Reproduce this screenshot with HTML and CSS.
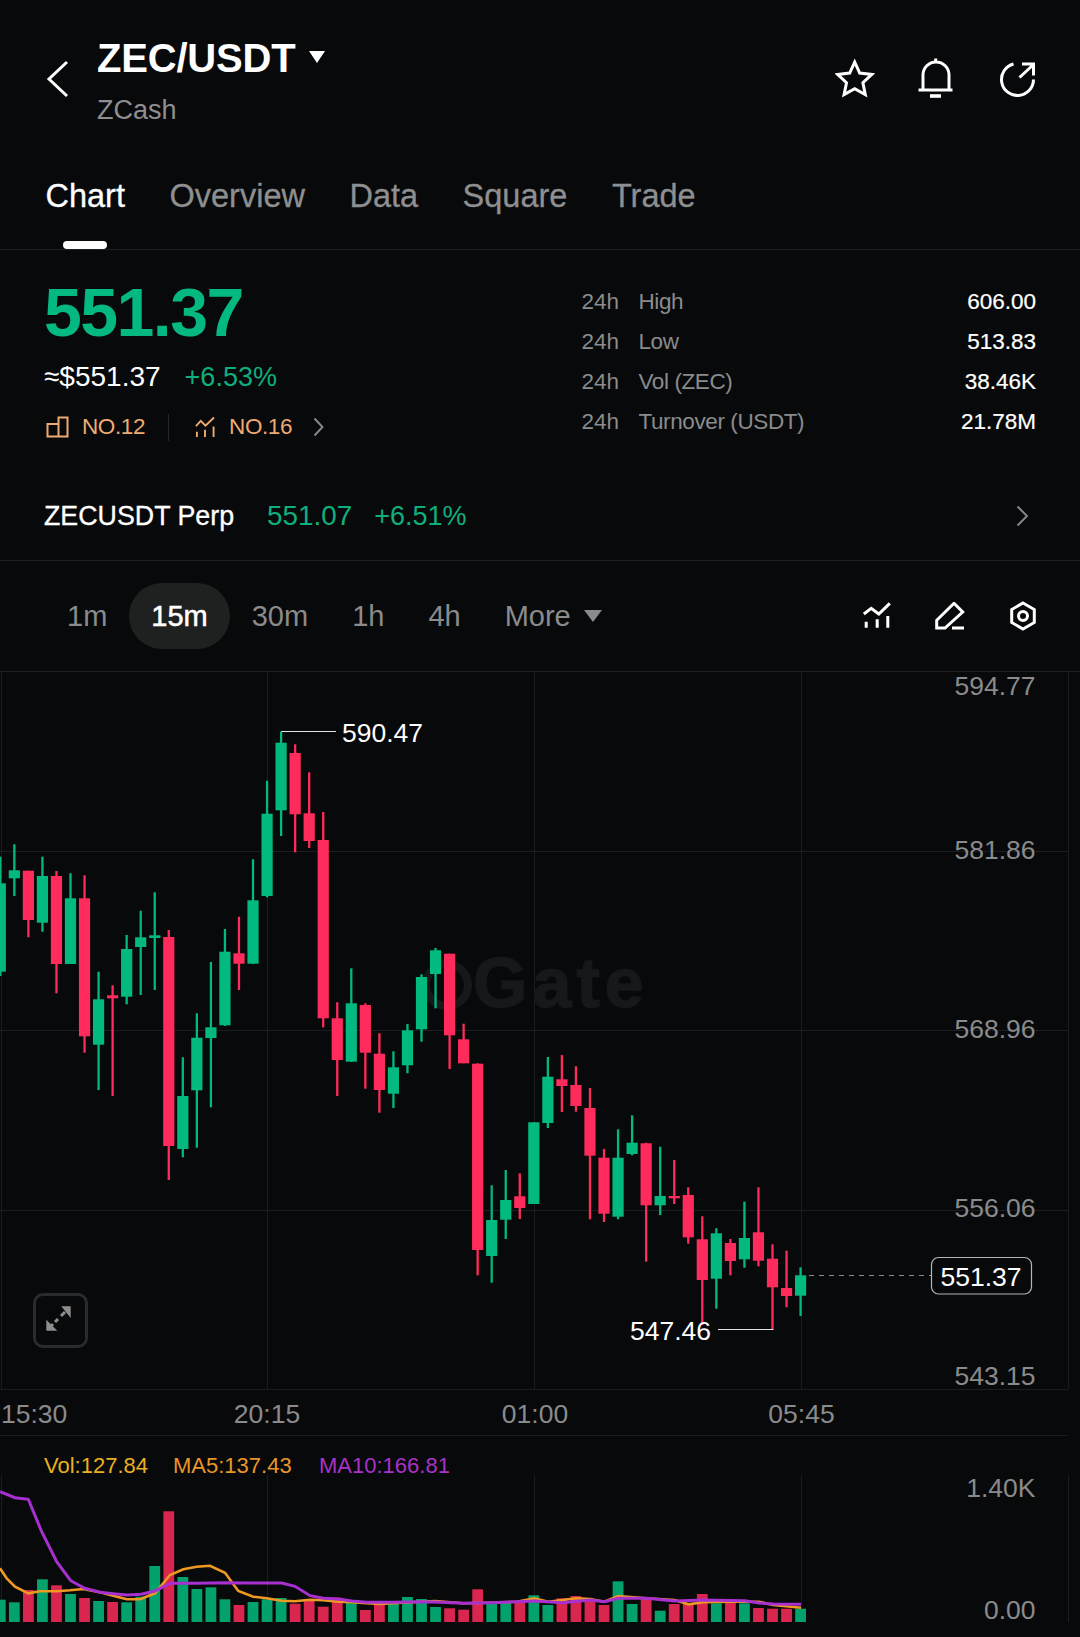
FILE: index.html
```html
<!DOCTYPE html>
<html lang="en">

<head>
    <meta charset="UTF-8">
    <title>ZEC/USDT</title>
    <link rel="stylesheet" href="styles.css">
</head>

<body>
    <header class="top">
        <svg class="back" width="24" height="40" viewBox="0 0 24 40">
            <path d="M21 3 L3 20 L21 37" />
        </svg>
        <div class="pair">
            <h1>ZEC/USDT <span class="caret"></span></h1>
            <p>ZCash</p>
        </div>
        <div class="top-icons">
            <svg width="40" height="40" viewBox="0 0 40 40">
                <path d="M19.7 4 L24.7 15 L36.8 16.4 L27.9 24.7 L30.3 36.6 L19.7 30.6 L9.1 36.6 L11.5 24.7 L2.6 16.4 L14.7 15 Z" />
            </svg>
            <svg width="40" height="40" viewBox="0 0 40 40">
                <path d="M7 32 V17 a13 13 0 0 1 26 0 V32 M2.5 32 H36.5 M19.7 0.5 V4" />
                <path d="M14 38 H25" class="thick" />
            </svg>
            <svg width="40" height="40" viewBox="0 0 40 40">
                <path d="M16.5 6 A16 16 0 1 0 36.5 21.5" />
                <path d="M22.5 19.5 L36 7 M25 6 H36.5 V17.5" />
            </svg>
        </div>
    </header>

    <nav class="tabs">
        <a class="valgt">Chart</a>
        <a>Overview</a>
        <a>Data</a>
        <a>Square</a>
        <a>Trade</a>
    </nav>

    <section class="market">
        <div class="price-box">
            <div class="price">551.37</div>
            <div class="sub-price">
                <span>≈$551.37</span>
                <span class="gain">+6.53%</span>
            </div>
            <div class="ranks">
                <svg class="rank-first-icon" width="23" height="22" viewBox="0 0 23 22">
                    <path d="M1.5 8 H12.5 V20.5 H1.5 Z M12.5 20.5 H21.5 V1.5 H12.5 V8" />
                </svg>
                <span class="rank-first">NO.12</span>
                <i class="rank-line"></i>
                <svg width="20" height="22" viewBox="0 0 21 22">
                    <path d="M1 10 L6 4.5 L11 9.5 L20 1 M2 16 V21.5 M10.5 14 V21.5 M19.5 10.5 V21.5" />
                </svg>
                <span class="rank-second">NO.16</span>
                <svg class="arrow" width="11" height="20" viewBox="0 0 11 20">
                    <path d="M1.5 1.5 L9.5 10 L1.5 18.5" />
                </svg>
            </div>
        </div>
        <div class="stats">
            <span>24h</span><span class="label">High</span><b>606.00</b>
            <span>24h</span><span class="label">Low</span><b>513.83</b>
            <span>24h</span><span class="label">Vol (ZEC)</span><b>38.46K</b>
            <span>24h</span><span class="label">Turnover (USDT)</span><b>21.78M</b>
        </div>
    </section>

    <section class="perp">
        <span class="perp-name">ZECUSDT Perp</span>
        <span class="perp-price">551.07</span>
        <span class="perp-gain">+6.51%</span>
        <svg class="arrow" width="13" height="22" viewBox="0 0 13 22">
            <path d="M1.5 1.5 L11 11 L1.5 20.5" />
        </svg>
    </section>

    <section class="toolbar">
        <button>1m</button>
        <button class="valgt">15m</button>
        <button>30m</button>
        <button>1h</button>
        <button>4h</button>
        <button>More<span class="more-caret"></span></button>
        <div class="tools">
            <svg width="28" height="28" viewBox="0 0 28 28">
                <path d="M0.8 12 L8.2 6.3 L15.8 12 L26.8 1.3 M3.2 19.7 V25.7 M14.2 17.3 V25.7 M24.8 14 V25.7" />
            </svg>
            <svg width="30" height="28" viewBox="0 0 30 28">
                <path d="M1.7 26 V18.3 L19 1.3 L27.7 10 L10 26 Z M17 26 H29" />
            </svg>
            <svg width="28" height="32" viewBox="0 0 28 32">
                <path d="M14 3 L25.3 9.5 V22.5 L14 29 L2.7 22.5 V9.5 Z" />
                <circle cx="14" cy="16" r="4.5" />
            </svg>
        </div>
    </section>

    <section class="chart">
        <svg id="kurve" width="1080" height="965" viewBox="0 672 1080 965">
            <g class="grid">
                <path d="M0 851.5 H1068 M0 1030.5 H1068 M0 1210.5 H1068 M0 1389.5 H1068 M0 1435.5 H1068" />
                <path d="M1.5 672 V1389 M267.5 672 V1389 M534.5 672 V1389 M801.5 672 V1389 M1068.5 672 V1389" />
                <path d="M1.5 1475 V1622 M267.5 1475 V1622 M534.5 1475 V1622 M801.5 1475 V1622 M1068.5 1475 V1622" />
            </g>

            <g class="watermark">
                <circle cx="447" cy="985" r="21" />
                <text x="473" y="1007">Gate</text>
            </g>

            <g id="candles"></g>
            <g id="volume"></g>

            <polyline class="ma5" points="0,1568.3 6.7,1578.3 15,1586.7 28.3,1593.3 40,1591.3 56.7,1591.3 70,1590.3 83.3,1589 100,1592.3 113.3,1595.7 126.7,1599.3 140,1599.3 155,1593.3 170,1575 183.3,1569.3 196.7,1566.7 210,1565.7 225,1572.7 238.3,1591 253.3,1596.7 266.7,1598.3 281.7,1600.7 295,1601.3 310,1599.7 323.3,1600.3 338.3,1601.7 351.7,1602.3 366.7,1603.3 380,1604 393.3,1603.3 420,1601.7 435,1601 463.3,1603.3 490,1602.7 516.7,1601.7 534.3,1598.3 548.3,1601.7 576.3,1598.3 590.3,1599 604.3,1601.7 618.3,1596 646.7,1598.3 674.7,1600 688.7,1604.3 702.7,1602.3 730.7,1601.7 759,1601.7 773,1605 801,1607.7" />
            <polyline class="ma10" points="0,1491.7 15,1497.7 28.3,1499.3 41.7,1531.7 56.7,1561.7 70.7,1580.7 84.7,1588.3 100,1592.3 113.3,1593.7 126.7,1595 141,1594.3 155,1591 170,1583.3 196.7,1583.3 225.3,1582.7 253.3,1583 281.7,1583 295,1586.3 310,1595.7 323.3,1598.3 338.3,1599 351.7,1601 366.7,1602.3 393.3,1602.3 420,1601.7 435,1602 463.3,1603.3 490,1602.7 516.7,1601.7 534.3,1601 562.3,1602.7 590.3,1600 604.3,1601.7 618.3,1598.3 646.7,1598.3 674.7,1601 702.7,1600 745,1600.7 759,1603 773,1604 801,1604.3" />

            <g class="axis">
                <text class="end" x="1035.5" y="695">594.77</text>
                <text class="end" x="1035.5" y="858.5">581.86</text>
                <text class="end" x="1035.5" y="1037.5">568.96</text>
                <text class="end" x="1035.5" y="1216.5">556.06</text>
                <text class="end" x="1035.5" y="1385">543.15</text>
                <text class="end" x="1035.5" y="1496.5">1.40K</text>
                <text class="end" x="1035.5" y="1619">0.00</text>
                <text x="1" y="1422.5">15:30</text>
                <text class="mid" x="267" y="1422.5">20:15</text>
                <text class="mid" x="535" y="1422.5">01:00</text>
                <text class="mid" x="801.5" y="1422.5">05:45</text>
            </g>

            <g class="legend">
                <text class="vol" x="44" y="1473">Vol:127.84</text>
                <text class="ma5-txt" x="173" y="1473">MA5:137.43</text>
                <text class="ma10-txt" x="319" y="1473">MA10:166.81</text>
            </g>

            <g class="marks">
                <path d="M281.5 732 V731.5 H336" />
                <text x="342" y="741.5">590.47</text>
                <path d="M718 1329.5 H773.5" />
                <text x="630" y="1339.5">547.46</text>
            </g>

            <path class="last-line" d="M809 1275.5 H932" />
            <rect class="last-box" x="931.5" y="1257.5" width="100" height="36.5" rx="7" />
            <text class="last-txt" x="940.5" y="1285.5">551.37</text>
        </svg>

        <button class="expand">
            <svg width="30" height="30" viewBox="0 0 30 30">
                <path d="M15.3 0.3 H24.7 V12 Z M0.3 13.7 V24.7 H11.3 Z" class="fill" />
                <path d="M19 6 L15 10 M12 13 L9 16 M7 18 L5 20" />
            </svg>
        </button>
    </section>

    <script src="script.js"></script>
</body>

</html>
```
FILE: styles.css
```css
* {
    box-sizing: border-box;
}

html,
body {
    margin: 0;
    height: 1637px;
    overflow: hidden;
}

body {
    background: #08090a;
    color: white;
    font-family: "Liberation Sans", Arial, sans-serif;
}

svg {
    display: block;
    fill: none;
    stroke: white;
    stroke-width: 3;
}

/* top bar */
.top {
    display: flex;
    height: 174px;
    padding: 33.5px 43px 0 46px;
}

.back {
    margin-top: 25.5px;
    margin-right: 27px;
}

.pair h1 {
    margin: 0;
    font-size: 40px;
    line-height: 48px;
    letter-spacing: -0.2px;
    display: flex;
    align-items: center;
}

.caret {
    width: 0;
    height: 0;
    margin-left: 14px;
    margin-top: -1px;
    border-left: 8.5px solid transparent;
    border-right: 8.5px solid transparent;
    border-top: 12px solid white;
}

.pair p {
    margin: 12.5px 0 0;
    font-size: 27px;
    line-height: 32px;
    color: #8e8f90;
}

.top-icons {
    display: flex;
    gap: 41px;
    margin-left: auto;
    margin-top: 24.5px;
}

.top-icons .thick {
    stroke-width: 3.6;
}

/* tabs */
.tabs {
    display: flex;
    gap: 44.5px;
    height: 76px;
    padding: 2px 0 0 45.5px;
    border-bottom: 1px solid #1f2021;
    font-size: 32.5px;
    line-height: 40px;
    color: #8e8f90;
    -webkit-text-stroke: 0.3px;
}

.tabs a {
    position: relative;
}

.tabs .valgt {
    color: white;
}

.tabs .valgt::after {
    content: "";
    position: absolute;
    left: 17px;
    top: 64.5px;
    width: 44px;
    height: 8.5px;
    border-radius: 4.5px;
    background: white;
}

/* price block */
.market {
    display: flex;
    justify-content: space-between;
    height: 220px;
    padding: 24px 44px 0 44px;
}

.price {
    font-size: 68px;
    line-height: 76px;
    font-weight: bold;
    letter-spacing: -1.55px;
    color: #03b981;
}

.sub-price {
    display: flex;
    gap: 24px;
    margin-top: 11px;
    font-size: 28px;
    line-height: 32px;
}

.gain {
    font-size: 27px;
    color: #0fae7e;
}

.ranks {
    display: flex;
    align-items: center;
    margin-top: 20px;
    font-size: 22.5px;
    line-height: 28px;
    letter-spacing: -0.4px;
    color: #edab72;
}

.ranks svg {
    stroke: #edab72;
    stroke-width: 2;
}

.rank-first-icon {
    margin-left: 2px;
}

.rank-first {
    margin-left: 13px;
}

.rank-line {
    width: 1px;
    height: 27px;
    margin: 0 26px 0 23px;
    background: #262728;
}

.rank-second {
    margin-left: 14px;
}

.ranks .arrow {
    margin-left: 21px;
    stroke: #85868a;
}

.stats {
    display: grid;
    grid-template-columns: 57px 1fr auto;
    grid-auto-rows: 40px;
    width: 454.5px;
    margin-top: 7.5px;
    font-size: 22.5px;
    line-height: 40px;
    color: #8a8b8c;
}

.stats .label {
    letter-spacing: -0.4px;
}

.stats b {
    font-weight: normal;
    color: white;
    text-align: right;
    -webkit-text-stroke: 0.2px;
}

/* perp row */
.perp {
    display: flex;
    align-items: center;
    height: 91px;
    padding: 30px 51px 28px 44px;
    border-bottom: 1px solid #1f2021;
    font-size: 26.8px;
    line-height: 32px;
}

.perp-name {
    -webkit-text-stroke: 0.3px;
}

.perp-price {
    margin-left: 33px;
    font-size: 27.8px;
    color: #0fae7e;
}

.perp-gain {
    margin-left: 22px;
    font-size: 27px;
    color: #0fae7e;
}

.perp .arrow {
    margin-left: auto;
    stroke: #85868a;
    stroke-width: 2;
}

/* period bar */
.toolbar {
    display: flex;
    align-items: center;
    height: 111px;
    padding: 0 43.5px 0 45px;
    border-bottom: 1px solid #1f2021;
}

.toolbar button {
    display: flex;
    align-items: center;
    height: 66px;
    padding: 0 22px;
    border: 0;
    border-radius: 33px;
    background: none;
    font-family: inherit;
    font-size: 29px;
    color: #8a8b8c;
}

.toolbar .valgt {
    background: #1f2121;
    color: white;
    -webkit-text-stroke: 0.5px;
}

.more-caret {
    width: 0;
    height: 0;
    margin-left: 13px;
    border-left: 9.5px solid transparent;
    border-right: 9.5px solid transparent;
    border-top: 12px solid #8a8b8c;
}

.tools {
    display: flex;
    align-items: center;
    gap: 44px;
    margin-left: auto;
}

/* chart */
.chart {
    position: relative;
}

.grid path {
    stroke: #1c1d1e;
    stroke-width: 1;
}

.watermark circle {
    stroke: #171819;
    stroke-width: 8;
}

.watermark text {
    fill: #171819;
    stroke: #171819;
    stroke-width: 1.5;
    font-size: 70px;
    font-weight: bold;
    letter-spacing: 5px;
}

#kurve text {
    font-family: "Liberation Sans", Arial, sans-serif;
}

.axis text {
    fill: #8a8b8c;
    stroke: none;
    font-size: 26.5px;
}

.axis .end {
    text-anchor: end;
}

.axis .mid {
    text-anchor: middle;
}

.legend text {
    stroke: none;
    font-size: 22px;
}

.vol {
    fill: #e9b020;
}

.ma5-txt {
    fill: #e8962a;
}

.ma10-txt {
    fill: #a832c9;
}

.ma5 {
    stroke: #ee9a22;
    stroke-width: 2.6;
}

.ma10 {
    stroke: #a82fd0;
    stroke-width: 3;
}

.marks path {
    stroke: #e4e4e4;
    stroke-width: 1;
}

.marks text,
.last-txt {
    fill: white;
    stroke: none;
    font-size: 26.5px;
}

.last-line {
    stroke: #8a8b8c;
    stroke-width: 1;
    stroke-dasharray: 5 5;
}

.last-box {
    stroke: #b5b5b5;
    stroke-width: 1.2;
    fill: #08090a;
}

.expand {
    position: absolute;
    left: 33px;
    top: 621px;
    display: flex;
    align-items: center;
    justify-content: center;
    width: 55px;
    height: 55px;
    padding: 0;
    border: 3px solid #2a2b2c;
    border-radius: 10px;
    background: none;
}

.expand path {
    stroke: #8e8e8e;
    stroke-width: 3;
}

.expand .fill {
    fill: #8e8e8e;
    stroke: none;
}
```
FILE: script.js
```js
// [wick top, body top, body bottom, wick bottom, up?, volume top]
const lys = [
    [856.7, 883.3, 971.7, 976, 1, 1599.7],
    [844.3, 870.3, 878.3, 896, 1, 1602.3],
    [870.7, 870.7, 920, 937.3, 0, 1590],
    [856.7, 876, 922.7, 931.7, 1, 1579.3],
    [871, 876, 964, 993.3, 0, 1585.3],
    [873.3, 898.3, 964, 964, 1, 1594],
    [875.3, 898.3, 1036.3, 1052.7, 0, 1598],
    [971.7, 999.3, 1044.7, 1090, 1, 1601],
    [985.3, 995.3, 998.3, 1096, 0, 1602],
    [935, 949, 996.7, 1004.3, 1, 1602.3],
    [910.7, 937.3, 947, 995, 1, 1596.7],
    [892.3, 935.3, 938, 990, 1, 1566],
    [930, 937, 1146, 1180, 0, 1511.3],
    [1057.3, 1096, 1149, 1157.3, 1, 1577],
    [1013.3, 1037.7, 1090.3, 1147.7, 1, 1589],
    [962, 1027.3, 1038, 1107.3, 1, 1587.3],
    [929, 951.7, 1025.3, 1026, 1, 1599.3],
    [916.7, 953.3, 963.7, 990, 0, 1605],
    [859.3, 900.3, 963.7, 963.7, 1, 1602],
    [780.7, 813.7, 896, 897.3, 1, 1599.3],
    [731.7, 742.7, 810.3, 836, 1, 1598],
    [744.3, 753, 814.3, 852.3, 0, 1603.7],
    [772.3, 813.3, 841, 848, 0, 1599.3],
    [812, 840, 1018.3, 1027.3, 0, 1606.7],
    [1002.3, 1018.3, 1060, 1096, 0, 1597.7],
    [968.3, 1003.3, 1061.7, 1061.7, 1, 1602.3],
    [1003.3, 1005, 1052.7, 1088.7, 0, 1610],
    [1033.3, 1053.7, 1090, 1112.7, 0, 1603.3],
    [1051.3, 1067.3, 1093.7, 1108, 1, 1602.7],
    [1024, 1030.3, 1065.3, 1073.3, 1, 1597],
    [974.3, 977, 1029.3, 1041.7, 1, 1599],
    [948, 950.3, 974, 1008.3, 1, 1607],
    [953.7, 953.7, 1035.3, 1069, 0, 1608.3],
    [1023.7, 1039.3, 1063.3, 1063.3, 0, 1609.7],
    [1063.3, 1063.7, 1250, 1275.3, 0, 1589.3],
    [1185.3, 1220, 1256, 1282.7, 1, 1602.7],
    [1170, 1200, 1219.7, 1239, 1, 1602.7],
    [1173.3, 1196.3, 1208, 1219, 0, 1601.7],
    [1122.3, 1122.3, 1204, 1204, 1, 1595.3],
    [1057, 1076.7, 1123, 1128, 1, 1605],
    [1055, 1079.3, 1086, 1112, 0, 1598.3],
    [1066.3, 1085, 1106, 1111.7, 0, 1596],
    [1088, 1108, 1155.7, 1219.3, 0, 1599],
    [1149, 1157.7, 1213.7, 1222, 0, 1605],
    [1129.3, 1157.7, 1216.7, 1219.3, 1, 1581.3],
    [1115.3, 1142.7, 1154, 1155.3, 1, 1604],
    [1142.7, 1143.3, 1205.3, 1261.7, 0, 1598.3],
    [1146.7, 1196, 1205.3, 1215, 1, 1610.7],
    [1160, 1196, 1198.3, 1204, 0, 1604],
    [1187.3, 1195, 1237.3, 1243.7, 0, 1603.3],
    [1216.3, 1239.3, 1280, 1325, 0, 1594],
    [1228.3, 1233.3, 1278.7, 1308.7, 1, 1603.3],
    [1239, 1243, 1261, 1275.3, 0, 1601.7],
    [1201.7, 1238, 1259.3, 1267.7, 1, 1603.3],
    [1187.3, 1232.3, 1260.7, 1266.3, 0, 1608],
    [1244.3, 1258.7, 1287.3, 1329.3, 0, 1608.7],
    [1250.7, 1288, 1296, 1307.3, 0, 1608.7],
    [1267.3, 1275.3, 1295.7, 1316, 1, 1608.7]
];

const afstand = 14.04;
const bund = 1622;
let stearin = "";
let soejler = "";

lys.forEach((l, i) => {
    const x = 0.3 + afstand * i;
    const farve = l[4] ? "#02b97f" : "#ff2b5c";
    const volFarve = l[4] ? "#03a16c" : "#d8264f";
    stearin += `<rect x="${x - 1.15}" y="${l[0]}" width="2.3" height="${l[3] - l[0]}" fill="${farve}" stroke="none" />`;
    stearin += `<rect x="${x - 5.6}" y="${l[1]}" width="11.2" height="${l[2] - l[1]}" fill="${farve}" stroke="none" />`;
    soejler += `<rect x="${x - 5.4}" y="${l[5]}" width="10.8" height="${bund - l[5]}" fill="${volFarve}" stroke="none" />`;
});

document.querySelector("#candles").innerHTML = stearin;
document.querySelector("#volume").innerHTML = soejler;
```
